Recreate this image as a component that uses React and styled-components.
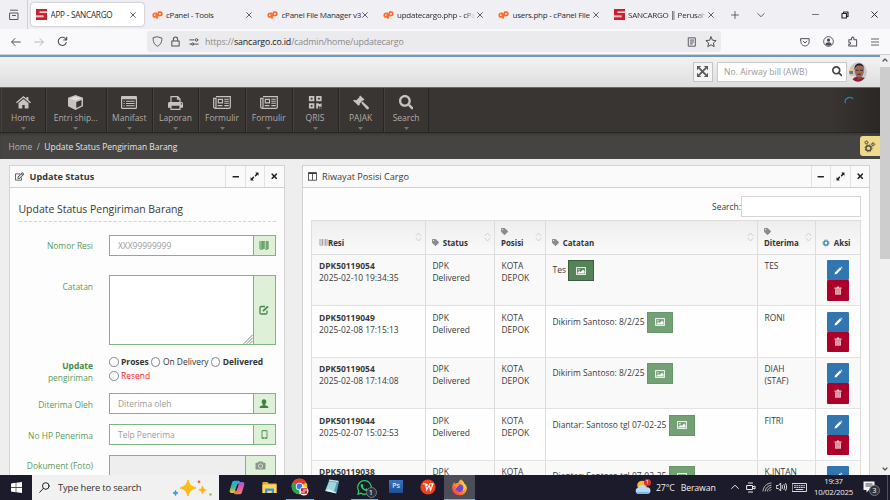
import React from "react";
import styled, { createGlobalStyle, css } from "styled-components";
import { FaQrcode, FaSearch, FaRegEdit, FaTag, FaTimes, FaMinus, FaWhatsapp } from "react-icons/fa";

const Global = createGlobalStyle`
  * { box-sizing: border-box; }
  body { margin: 0; background: #eee; overflow: hidden; }
  svg { display: block; flex: none; }
`;

const Screen = styled.div`
  width: 890px;
  height: 500px;
  display: flex;
  flex-direction: column;
  overflow: hidden;
  font-family: "Open Sans", "Noto Sans", sans-serif;
  font-size: 8.45px;
  color: #393939;
  white-space: nowrap;
`;

/* ---------- browser chrome ---------- */
const TabBar = styled.div`
  flex: none;
  height: 29px;
  background: #f0f0f4;
  display: flex;
  align-items: center;
`;
const TabMenu = styled.div`
  flex: none;
  width: 28px;
  height: 29px;
  border-right: 1px solid #cfcfd6;
  display: flex;
  align-items: center;
  justify-content: center;
  margin-right: 3px;
`;
const Tab = styled.div`
  flex: none;
  width: 112.5px;
  height: 23px;
  margin-right: 3px;
  padding-left: 5px;
  display: flex;
  align-items: center;
  border-radius: 3px;
  ${(p) => p.$active && css`
    background: #fff;
    box-shadow: 0 0 2px rgba(0, 0, 0, 0.4);
  `}
`;
const TabTitle = styled.span`
  flex: none;
  width: ${(p) => p.$w}px;
  margin-left: 3.5px;
  font-size: ${(p) => p.$s || 8}px;
  letter-spacing: -0.25px;
  color: #2b2a33;
  overflow: hidden;
  ${(p) => p.$fade && css`
    mask-image: linear-gradient(90deg, #000 88%, transparent 100%);
  `}
`;
const TabClose = styled.div`
  width: 8px;
  margin-left: ${(p) => p.$ml}px;
`;
const NavBar = styled.div`
  flex: none;
  height: 26px;
  background: #f9f9fb;
  border-bottom: 1px solid #d0d0d4;
  display: flex;
  align-items: center;
`;
const NavSlot = styled.div`
  flex: none;
  width: ${(p) => p.$w}px;
  display: flex;
  justify-content: center;
  color: ${(p) => p.$c || "#4f4f59"};
`;
const UrlBar = styled.div`
  width: 574px;
  height: 21px;
  border-radius: 3px;
  background: #ebebed;
  display: flex;
  align-items: center;
`;
const Url = styled.div`
  flex: 1;
  padding-left: 2px;
  padding-top: 1px;
  font-size: 8.8px;
  letter-spacing: -0.13px;
  color: #8a8a8f;
`;
const UrlHost = styled.span`
  color: #17171c;
`;

/* ---------- web page ---------- */
const Viewport = styled.div`
  flex: 1;
  min-height: 0;
  display: flex;
`;
const Page = styled.div`
  width: 879.5px;
  height: 420px;
  overflow: hidden;
  background: #eeeeee;
  display: flex;
  flex-direction: column;
`;
const ScrollBar = styled.div`
  flex: 1;
  background: #f0f0f0;
  display: flex;
  flex-direction: column;
  align-items: center;
  justify-content: space-between;
  padding: 2px 0 3px;
`;
const Thumb = styled.div`
  width: 10px;
  height: 192px;
  margin: 4px 0 auto;
  background: #cdcdcd;
`;
const Header = styled.header`
  flex: none;
  height: 33px;
  border-top: 2px solid #6c9bc1;
  border-bottom: 1px solid #6d6966;
  background: linear-gradient(#f2f2f2, #dedede);
  display: flex;
  align-items: center;
  justify-content: flex-end;
  padding: 0 13px 1px 0;
`;
const FullBtn = styled.div`
  width: 19.5px;
  height: 20px;
  border: 1px solid #c4c4c4;
  background: #f4f4f4;
  display: flex;
  align-items: center;
  justify-content: center;
  margin-right: 4px;
`;
const AwbBox = styled.div`
  width: 130px;
  height: 20px;
  border: 1px solid #cacaca;
  background: #fff;
  display: flex;
  align-items: center;
  justify-content: space-between;
  padding: 0 3.5px 0 6.5px;
  font-size: 8.6px;
  color: #999;
  margin-right: 2px;
`;
const Menu = styled.nav`
  flex: none;
  height: 45px;
  border-bottom: 1px solid #272422;
  background: linear-gradient(90deg, #393532 0 830px, #2b2725 880px);
  display: flex;
  padding-left: 1px;
`;
const MenuItem = styled.div`
  width: ${(p) => p.$w}px;
  border-right: 1px solid #282522;
  box-shadow: inset 1px 0 #47423f;
  display: flex;
  flex-direction: column;
  align-items: center;
  color: #c8c3bf;
`;
const MenuIcon = styled.div`
  height: 15px;
  margin-top: 7px;
  display: flex;
  align-items: center;
`;
const MenuLabel = styled.div`
  height: 12px;
  line-height: 12px;
  margin-top: 2px;
  color: #b0aba7;
  font-size: 8.5px;
`;
const MenuCaret = styled.div`
  margin-top: 3px;
`;
const Loader = styled.div`
  margin: 8px 0 0 auto;
  width: 36px;
`;
const Crumbs = styled.div`
  flex: none;
  height: 26px;
  background: #464442;
  box-shadow: inset 0 2px 2px #3b3937;
  display: flex;
  align-items: center;
  padding-left: 8.5px;
  font-size: 8.45px;
  color: #b8b5b3;
`;
const Current = styled.span`
  margin-left: 4.5px;
  color: #e6e4e2;
`;
const GearTab = styled.div`
  margin-left: auto;
  width: 20px;
  height: 20px;
  border-radius: 3px 0 0 3px;
  background: #f0d88c;
  display: flex;
  align-items: center;
  justify-content: center;
`;
const Columns = styled.main`
  flex: 1;
  display: flex;
  gap: 17px;
  padding: 6px 0 0 9px;
`;
const Panel = styled.section`
  width: ${(p) => p.$w}px;
  height: 340px;
  border: 1px solid #d3d3d3;
  background: #fdfdfd;
`;
const PanelHead = styled.div`
  height: 22px;
  border-bottom: 1px solid #cfcfcf;
  background: #fafafa;
  display: flex;
  align-items: stretch;
`;
const PanelTitle = styled.div`
  flex: 1;
  display: flex;
  align-items: center;
  gap: 5.5px;
  padding-left: 5px;
  font-size: 9.15px;
  font-weight: ${(p) => (p.$bold ? 700 : 400)};
`;
const PanelTool = styled.div`
  width: 19.5px;
  border-left: 1px solid #e2e2e2;
  display: flex;
  align-items: center;
  justify-content: center;
  color: #222;
`;

/* ---------- form ---------- */
const FormBody = styled.div`
  padding: 0 8px 0 8.5px;
`;
const FormTitle = styled.div`
  height: 34px;
  padding-top: 8.5px;
  line-height: 24px;
  border-bottom: 1px dashed #d4d4d4;
  font-size: 10.45px;
`;
const Field = styled.div`
  display: flex;
  margin-top: ${(p) => p.$mt}px;
  height: ${(p) => p.$h}px;
`;
const Label = styled.div`
  width: 74.5px;
  margin-right: 16px;
  padding-top: ${(p) => p.$pt ?? 5.5}px;
  line-height: 12px;
  text-align: right;
  color: #5a9a5a;
  font-size: 8.45px;
`;
const LabelStrong = styled.div`
  font-weight: 700;
  color: #458c45;
`;
const Control = styled.div`
  flex: 1;
  display: flex;
  border: 1px solid #80b581;
  background: ${(p) => (p.$disabled ? "#eeeeee" : "#fff")};
`;
const ControlText = styled.div`
  flex: 1;
  padding-left: 8px;
  display: flex;
  align-items: ${(p) => (p.$area ? "flex-end" : "center")};
  justify-content: ${(p) => (p.$area ? "flex-end" : "flex-start")};
  color: #9b9b9b;
  font-size: 8.45px;
`;
const Addon = styled.div`
  width: ${(p) => p.$w || 22}px;
  border-left: 1px solid #80b581;
  background: #dff0d8;
  display: flex;
  align-items: center;
  justify-content: center;
  color: #468847;
`;
const Radios = styled.div`
  flex: 1;
  display: flex;
  flex-wrap: wrap;
  align-content: flex-start;
  line-height: 14px;
`;
const Radio = styled.label`
  display: flex;
  align-items: center;
  height: 14px;
  gap: 2.5px;
  margin-right: 2.2px;
  font-size: 8.45px;
  font-weight: ${(p) => (p.$bold ? 700 : 400)};
  color: ${(p) => p.$c || "#333"};
`;
const Ring = styled.span`
  width: 9.5px;
  height: 9.5px;
  border-radius: 50%;
  border: 1.4px solid #85848d;
  background: #fff;
`;

/* ---------- table ---------- */
const TableBody = styled.div`
  padding: 8px 8px 0 8.5px;
`;
const SearchLine = styled.div`
  height: 21px;
  display: flex;
  justify-content: flex-end;
  align-items: center;
  margin-bottom: 3px;
`;
const SearchLabel = styled.span`
  margin-top: -1px;
`;
const SearchInput = styled.div`
  width: 120px;
  height: 21px;
  border: 1px solid #d5d5d5;
  background: #fff;
`;
const Table = styled.div`
  border: 1px solid #ddd;
`;
const columns = css`
  display: grid;
  grid-template-columns: 113.5px 69px 51px 212px 58px 1fr;
`;
const HeadRow = styled.div`
  ${columns}
  height: 33.5px;
  background: linear-gradient(#eeeeee, #fafafa);
  border-bottom: 1px solid #ddd;
`;
const HeadCell = styled.div`
  border-right: ${(p) => (p.$last ? 0 : 1)}px solid #ddd;
  padding: ${(p) => (p.$stack ? 4 : 15.5)}px 3px 0 6.5px;
  display: flex;
  justify-content: space-between;
  font-weight: 700;
  line-height: 12px;
  font-size: 7.9px;
  color: #333;
`;
const HeadLabel = styled.div`
  display: flex;
  flex-direction: ${(p) => (p.$stack ? "column" : "row")};
  align-items: ${(p) => (p.$stack ? "flex-start" : "center")};
  gap: ${(p) => p.$gap ?? 3.8}px;
  height: ${(p) => (p.$stack ? "auto" : "12px")};
`;
const SortMark = styled.div`
  margin-top: ${(p) => (p.$stack ? 7 : -4.5)}px;
`;
const Row = styled.div`
  ${columns}
  height: 51.5px;
  border-bottom: 1px solid #e2e2e2;
  background: ${(p) => (p.$odd ? "#f9f9f9" : "#fefefe")};
`;
const Cell = styled.div`
  border-right: ${(p) => (p.$last ? 0 : 1)}px solid #ddd;
  padding: 5.5px 0 0 ${(p) => p.$pl ?? 7}px;
  line-height: 12.4px;
  font-size: 8.45px;
  overflow: hidden;
`;
const NoteLine = styled.div`
  display: flex;
  align-items: center;
  gap: 2.5px;
  height: 21px;
`;
const PhotoBtn = styled.div`
  width: 26px;
  height: 21px;
  background: ${(p) => (p.$dark ? "#568259" : "#73a074")};
  border: 1px solid ${(p) => (p.$dark ? "#355e39" : "#669768")};
  display: flex;
  align-items: center;
  justify-content: center;
`;
const ActionBtn = styled.div`
  width: 22px;
  height: 20.3px;
  margin-left: 11.5px;
  background: ${(p) => (p.$danger ? "#ab0029" : "#3276b1")};
  border-radius: 1px;
  display: flex;
  align-items: center;
  justify-content: center;
`;

/* ---------- taskbar ---------- */
const Taskbar = styled.footer`
  flex: none;
  height: 25px;
  background: #1b1b2b;
  display: flex;
  color: #eee;
`;
const Slot = styled.div`
  width: ${(p) => p.$w}px;
  height: 25px;
  margin: 0 ${(p) => p.$m || 0}px;
  display: flex;
  align-items: center;
  justify-content: center;
  background: ${(p) => (p.$active ? "#4d4d5a" : "transparent")};
  border-bottom: 1px solid ${(p) => (p.$running ? "#6cb0e8" : "transparent")};
`;
const Divider = styled.div`
  width: 1px;
  margin-left: 5px;
  margin-right: 2px;
  background: #4f4f5e;
`;
const SearchBox = styled.div`
  width: 187px;
  background: #f1f1f1;
  display: flex;
  align-items: center;
  padding-left: 7px;
  color: #333;
  font-size: 9.4px;
`;
const SearchHint = styled.span`
  flex: 1;
  margin-left: 8px;
  letter-spacing: -0.15px;
`;
const Weather = styled.div`
  width: 71px;
  display: flex;
  align-items: center;
  gap: 6px;
  font-size: 8.75px;
  letter-spacing: -0.15px;
`;
const Clock = styled.div`
  width: 49px;
  padding-top: 1px;
  text-align: center;
  font-size: 7.8px;
  line-height: 11.4px;
  letter-spacing: -0.25px;
`;
const Spacer = styled.div`
  flex: 1;
`;

/* ---------- drawings ---------- */
const Stroke = ({ w = 12, h = w, vb = "0 0 12 12", sw = 1, c = "currentColor", children }) => (
  <svg width={w} height={h} viewBox={vb} fill="none" stroke={c} strokeWidth={sw} strokeLinecap="round" strokeLinejoin="round">
    {children}
  </svg>
);
const Cross = ({ s = 6, c = "#3c3c44" }) => (
  <Stroke w={s} vb="0 0 6 6" sw={0.8} c={c}><path d="M.6.6l4.800 4.800M5.400.6L.6 5.400" /></Stroke>
);
const SLogo = () => (
  <svg width="11" height="11" viewBox="0 0 11 11">
    <path d="M0 0h11v2.400H3.600v1.700H11V11H0V8.300h7.600V6.600H0z" fill="#c9222e" />
    <path d="M3.600 3.200H11M0 7.500h7.400" stroke="#ec969b" strokeWidth=".6" />
  </svg>
);
const CpLogo = () => (
  <svg width="11" height="8" viewBox="0 0 11 8" fill="none" stroke="#ff6c2c" strokeWidth="1.700" strokeLinejoin="round" strokeLinecap="round">
    <path d="M4.400 2.400H3a1.700 1.700 0 000 3.500h.8L4.500 3.600M5 7l1.600-5.800h1.600a1.600 1.600 0 010 3.300H6.800" />
  </svg>
);

const HomeIcon = () => (
  <svg width="15" height="13" viewBox="0 0 15 13" fill="currentColor">
    <path d="M7.500 2.900l5 4.200v4.800c0 .4-.2.600-.6.600H8.700V8.900H6.300v3.600H3.100c-.4 0-.6-.2-.6-.6V7.100z" />
    <path d="M7.500 0L10.400 2.400V.9h2v3.200L15 6.300l-.9 1L7.500 1.800.9 7.300 0 6.300z" />
  </svg>
);
const CubeIcon = () => (
  <svg width="15" height="15" viewBox="0 0 15 15">
    <path d="M7.500 0L15 2.800v8.500L7.500 15 0 11.300V2.800z" fill="currentColor" />
    <path d="M7.500 1.500L13 3.500 7.500 5.500 2 3.500z" fill="#e5e0dc" />
    <path d="M8.300 7.100l5.200-2v5.400L8.300 13.100z" fill="#393532" />
  </svg>
);
const ManifestIcon = () => (
  <svg width="16" height="13" viewBox="0 0 16 13">
    <path fillRule="evenodd" fill="currentColor" d="M1.200 0h13.600c.7 0 1.200.5 1.200 1.200v10.600c0 .7-.5 1.200-1.200 1.200H1.200C.5 13 0 12.500 0 11.800V1.200C0 .5.500 0 1.200 0zM1.200 3.300v8.500h13.600V3.300z" />
    <path d="M2.500 5.200h1.200M5 5.200h8.600M2.500 7.500h1.200M5 7.500h8.600M2.500 9.800h1.200M5 9.800h8.600" stroke="currentColor" strokeWidth="1.100" />
  </svg>
);
const PrintIcon = () => (
  <svg width="15" height="14" viewBox="0 0 15 14">
    <path d="M3 6.500V.7h6.800l2.200 2.200v3.600M9.500.7v2.500H12" fill="none" stroke="currentColor" strokeWidth="1.200" />
    <path fillRule="evenodd" fill="currentColor" d="M1.700 6h11.600c1 0 1.700.7 1.700 1.700v4H12.600V14H2.400v-2.300H0v-4C0 6.700.7 6 1.700 6zM3.600 9.800v3h7.800v-3zM12.800 7.200v1.200H14V7.200z" />
  </svg>
);
const NewsIcon = () => (
  <svg width="18" height="13" viewBox="0 0 18 13" fill="none" stroke="currentColor" strokeWidth="1.200">
    <path d="M3 .7h14.300v10.200c0 .9-.5 1.400-1.300 1.400H2.300C1.300 12.300.7 11.700.7 10.700V2.400H3v8.400c0 1-.6 1.500-1.200 1.500" />
    <path d="M5.300 3.300h4.200v3.500H5.300z" />
    <path d="M11.300 3.200h4.500M11.300 5.200h4.500M11.300 7.200h4.500M4.700 9.600h4.800M11.300 9.600h4.500" strokeWidth="1.100" />
  </svg>
);
const GavelIcon = () => (
  <svg width="16" height="15" viewBox="0 0 16 15" fill="currentColor">
    <path d="M7.200.4l4.300 4.200-1 1-.5-.3-3.300 3.300.3.600-1 1L1.700 6l1-1 .6.300L6.600 2l-.4-.6z" />
    <path d="M0 5.500l1.500-.7 5 5-1 1z" />
    <path d="M8.200 7.800L9.500 6.500l1.300 1.300 4.700 4.300c.6.700.6 1.300 0 1.900s-1.300.6-1.900 0L9.300 9.200z" />
  </svg>
);
const QrIcon = () => <FaQrcode size={14.5} />;
const MagnifierIcon = () => <FaSearch size={14.5} />;
const CaretIcon = () => <svg width="5" height="3" viewBox="0 0 5 3"><path d="M0 0h5L2.500 3z" fill="#78736f" /></svg>;

const TagBox = styled.span`
  display: inline-flex;
  height: 12px;
  align-items: center;
`;
const TagIcon = () => <TagBox><FaTag size={7} color="#8c8c8c" /></TagBox>;
const SortIcon = () => (
  <Stroke w={7} h={10} vb="0 0 7 10" sw={0.8} c="#c9c9c9"><path d="M1 3.800L3.500 1 6 3.800M1 6.200L3.500 9 6 6.200" /></Stroke>
);
const BarcodeIcon = ({ c = "#468847", w = 10, h = 9 }) => (
  <svg width={w} height={h} viewBox="0 0 10 9" preserveAspectRatio="none" fill={c}>
    <path d="M.5 0h1v8h-1zM2 0h.6v8H2zM3.200 0h1.500v8H3.200zM5.400 0H6v8h-.6zM6.700 0h1v8h-1zM8.300 0h1.200v8H8.300zM1 8.400h3v.6H1zM6 8.400h3v.6H6z" />
  </svg>
);
const ExpandIcon = () => (
  <svg width="9" height="9" viewBox="0 0 9 9" fill="#222">
    <path d="M5.200.5h3.300v3.300L7.500 2.800 5.600 4.700l-.9-.9L6.200 1.500zM3.800 8.500H.5V5.200l1 1L3.400 4.300l.9.900L2.800 7.500z" />
  </svg>
);
const FullIcon = () => (
  <svg width="11" height="11" viewBox="0 0 10 10">
    <path d="M2 2l6 6M8 2L2 8" stroke="#585858" strokeWidth="1.600" />
    <path d="M0 0h3.800L0 3.800zM10 0v3.800L6.200 0zM0 10V6.200L3.800 10zM10 10H6.200L10 6.200z" fill="#585858" />
  </svg>
);
const ColumnsIcon = () => (
  <svg width="9" height="9" viewBox="0 0 9 9" fill="none" stroke="#333" strokeWidth=".8">
    <rect x=".5" y=".8" width="8" height="7.400" /><path d="M4.500 1v7" /><path d="M.5 1.200h8" strokeWidth="1.500" />
  </svg>
);
const PictureIcon = () => (
  <svg width="10" height="8" viewBox="0 0 10 8">
    <rect x=".6" y=".6" width="8.800" height="6.800" fill="none" stroke="#f3f8f3" strokeWidth="1" />
    <circle cx="2.900" cy="2.700" r=".8" fill="#f3f8f3" />
    <path d="M1.500 6.400V5.500L3.500 4l1.200 1 2.300-2.500 1.500 1.800v2.100z" fill="#f3f8f3" />
  </svg>
);
const PencilIcon = () => (
  <svg width="9" height="9" viewBox="0 0 9 9" fill="#fff">
    <path d="M.5 8.500l.6-2.200L5.900 1.500l1.600 1.600-4.800 4.800zM6.400 1l.6-.5 1.500 1.500-.5.600z" />
  </svg>
);
const TrashIcon = () => (
  <svg width="8" height="9" viewBox="0 0 8 9">
    <path d="M3 .5h2v1h2.500v1.200h-7V1.500H3z" fill="#f6d5dc" />
    <path d="M1 3.200h6V8.700H1z" fill="#e6b0bb" />
    <path d="M2.700 3.800v4M4 3.800v4M5.300 3.800v4" stroke="#c86078" strokeWidth=".5" />
  </svg>
);
const GearShape = ({ x, y, r, w, c }) => (
  <g fill="none" stroke={c}>
    <circle cx={x} cy={y} r={r} strokeWidth={w} />
    <circle cx={x} cy={y} r={r + w * 0.7} strokeWidth={w * 0.6} strokeDasharray={`${(r + w * 0.7) * 0.3927}`} />
  </g>
);
const UserIcon = () => (
  <svg width="10" height="9" viewBox="0 0 10 9" fill="#3f833f">
    <path d="M5 .2c1.500 0 2.300 1 2.300 2.500 0 1.200-.6 2.100-1.200 2.600v.8c.2.500 3.200 1 3.200 1.800V9H.7V7.900c0-.8 3-1.300 3.200-1.800v-.8C3.300 4.800 2.700 3.900 2.700 2.700 2.700 1.200 3.500.2 5 .2z" />
  </svg>
);
const PhoneIcon = () => (
  <svg width="7" height="9" viewBox="0 0 7 9"><path fillRule="evenodd" fill="#5f9c5f" d="M1.500 0h4a1 1 0 011 1v7a1 1 0 01-1 1h-4a1 1 0 01-1-1V1a1 1 0 011-1zm0 1.200v6h4v-6zM3 7.700v.7h1v-.7z" /></svg>
);
const CameraIcon = () => (
  <svg width="11" height="9" viewBox="0 0 11 9">
    <path d="M3.500.5h4l.8 1.300h1.500c.4 0 .7.300.7.700v5.300c0 .4-.3.700-.7.700H1.200a.7.7 0 01-.7-.7V2.500c0-.4.3-.7.700-.7h1.500z" fill="#8d948b" />
    <circle cx="5.500" cy="5" r="2.100" fill="none" stroke="#dff0d8" strokeWidth=".8" />
  </svg>
);
const EditIcon = () => (
  <svg width="10" height="10" viewBox="0 0 10 10" fill="none" stroke="#468847">
    <path d="M6 1.500H2.200A1.200 1.200 0 001 2.700v5A1.200 1.200 0 002.200 9h4.600A1.200 1.200 0 008 7.700V5.500" strokeWidth="1.300" />
    <path d="M4 6.200L9 1.300" strokeWidth="1.700" />
  </svg>
);
const Avatar = () => (
  <svg width="18" height="20" viewBox="0 0 18 20">
    <defs><clipPath id="av"><ellipse cx="9" cy="10" rx="8.800" ry="9.700" /></clipPath></defs>
    <g clipPath="url(#av)">
      <path d="M0 0h18v20H0z" fill="#c9c3cc" /><path d="M0 5h5v8H0z" fill="#d9c98f" /><path d="M0 9h4v3H0z" fill="#6a729a" />
      <path d="M0 14h6v6H0z" fill="#e3e0e6" />
      <path d="M3 20c0-4 3-5 5-5s9-1 10 5z" fill="#8e1f2c" /><path d="M7 13h6l-1 4-3 1z" fill="#7a4a3c" />
      <ellipse cx="10.300" cy="9" rx="4.600" ry="6.200" fill="#9c6a57" />
      <path d="M5.500 8C4.500-.5 15.800-.5 15 7.500c-.5-3-1.500-4-4.700-4S6.500 5 5.500 8z" fill="#241f23" />
      <path d="M6.700 8.300h2.800M11 8.300h3M8.500 12.300h3.500" stroke="#3c2925" strokeWidth="1.100" />
    </g>
  </svg>
);
const Sparkles = () => (
  <svg width="42" height="20" viewBox="0 0 42 20">
    <path d="M17 2c1.600 5 2.500 6 8 8-5.500 1.800-6.400 3-8 8-1.600-5-2.500-6.200-8-8 5.500-2 6.400-3 8-8z" fill="#fbbc14" stroke="#fbbc14" strokeLinejoin="round" />
    <path d="M31.500 8c.8 2.600 1.400 3.300 4 4-2.600.8-3.200 1.500-4 4-.8-2.500-1.400-3.200-4-4 2.600-.7 3.200-1.400 4-4z" fill="#fbb31d" stroke="#fbb31d" strokeWidth=".6" />
    <path d="M4.500 12.500c.4 1.600.8 2 2.500 2.500-1.700.5-2.100.9-2.500 2.500-.4-1.600-.8-2-2.500-2.500 1.700-.5 2.100-.9 2.500-2.500z" fill="#2b9fe8" stroke="#2b9fe8" />
    <circle cx="28" cy="3.800" r="1.400" fill="#ee6337" /><circle cx="39.500" cy="16.500" r="1.200" fill="#86c440" />
  </svg>
);
const Copilot = () => (
  <svg width="16" height="15" viewBox="0 0 16 15">
    <defs>
      <linearGradient id="cpa" x2="0" y2="1"><stop stopColor="#24a9ee" /><stop offset=".55" stopColor="#42b883" /><stop offset="1" stopColor="#f6c83a" /></linearGradient>
      <linearGradient id="cpb" x2="0" y2="1"><stop stopColor="#8a62e8" /><stop offset=".5" stopColor="#ee5a9c" /><stop offset="1" stopColor="#f68246" /></linearGradient>
    </defs>
    <path d="M5 .8h4.500c1.300 0 1.500 1 1.800 2L8.800 4 6.500 11c-.5 1.500-1.200 2-2.500 2H2.500C.8 13 .3 11.500.8 10L3 2.800C3.400 1.500 4 .8 5 .8z" fill="url(#cpa)" />
    <path d="M11 14.200H6.500c-1.300 0-1.500-1-1.800-2L7.200 11 9.500 4c.5-1.500 1.200-2 2.500-2h1.500c1.700 0 2.200 1.500 1.700 3L13 12.200c-.4 1.300-1 2-2 2z" fill="url(#cpb)" />
    <path d="M9 4.500L6.800 10.500" stroke="#1b1b2b" strokeWidth="1.300" />
  </svg>
);
const Folder = () => (
  <svg width="15" height="13" viewBox="0 0 15 13">
    <path d="M.5 1h5l1.200 1.500h7.800V12H.5z" fill="#e2a931" /><path d="M.5 3.500h14V12H.5z" fill="#fcd462" />
    <path d="M3 12V8.500c0-.6.400-1 1-1h7c.6 0 1 .4 1 1V12H9.800V9.800H5.200V12z" fill="#3894d8" />
  </svg>
);
const Chrome = () => (
  <svg width="18" height="18" viewBox="0 0 18 18">
    <circle cx="8.500" cy="8.500" r="7.800" fill="#fbc116" />
    <path d="M8.500 8.500L1.700 4.600A7.800 7.800 0 0115.300 4.600z" fill="#e33b2e" />
    <path d="M8.500 8.500L1.700 4.600A7.800 7.800 0 008 16.300z" fill="#2da14c" />
    <circle cx="8.500" cy="8.500" r="3.700" fill="#fff" /><circle cx="8.500" cy="8.500" r="2.900" fill="#347de8" />
    <circle cx="13" cy="13" r="4.500" fill="#f5e9ea" />
    <path d="M10 10.200h6v1.400h-4v.8h4v3.400h-6v-1.400h4v-.8h-4z" fill="#c9222e" />
  </svg>
);
const Notepad = () => (
  <svg width="16" height="16" viewBox="0 0 16 16">
    <path d="M5 1.500l10 1.300-2.500 11.500L1 12z" fill="#4f9db5" /><path d="M5.200 2.500l7.500 1L10 12.500 1.800 11z" fill="#9ed8df" />
    <path d="M1 11.800l3.500-1.500 7 2.700.8 1.500z" fill="#e9f1ee" /><path d="M5 1.200l9.500 1.300" stroke="#d8dfdf" strokeWidth="1.300" />
  </svg>
);
const BadgeBox = styled.div`
  position: relative;
`;
const Badge = styled.span`
  position: absolute;
  left: ${(p) => p.$x}px;
  top: ${(p) => p.$y}px;
  width: ${(p) => p.$s || 11}px;
  height: ${(p) => p.$s || 11}px;
  border-radius: 50%;
  border: ${(p) => (p.$c ? 0 : 1)}px solid #77787c;
  background: ${(p) => p.$c || "#303238"};
  color: #fff;
  font-size: ${(p) => (p.$c ? 5.5 : 7.5)}px;
  line-height: ${(p) => (p.$c ? 7 : 9)}px;
  display: flex;
  align-items: center;
  justify-content: center;
`;
const PsTile = styled.div`
  width: 14px;
  height: 13px;
  margin-bottom: 2px;
  background: linear-gradient(#3a76c2, #1d4f98);
  color: #d8ebff;
  font-size: 7px;
  font-weight: 600;
  line-height: 12px;
  text-align: center;
`;
const Wps = () => (
  <svg width="16" height="16" viewBox="0 0 16 16">
    <circle cx="8" cy="8" r="7.600" fill="#f5401d" />
    <path d="M3.200 4.800h2.300l1.300 6L9.300 6l1.200 5 2.500-6.200H9M6.500 4.800l.8 2" fill="none" stroke="#fff" strokeWidth="1.200" />
  </svg>
);
const Firefox = () => (
  <svg width="17" height="17" viewBox="0 0 17 17">
    <defs>
      <linearGradient id="ffa" x1="1" x2="0" y2="1"><stop stopColor="#ffe23e" /><stop offset=".5" stopColor="#ff8a25" /><stop offset="1" stopColor="#f2295b" /></linearGradient>
    </defs>
    <path d="M10 .5c2 1.200 3 2.500 3.200 4 1.800 1 2.800 3 2.800 5A7.300 7.300 0 018.500 16.300 7.400 7.400 0 011 9c0-2.500 1-4.500 2.500-6l.5 2c1-1 2-1.200 3-1 .8-1.600 1.500-2.800 3-3.500z" fill="url(#ffa)" />
    <circle cx="8.700" cy="9.300" r="3.700" fill="#7542d8" />
    <path d="M3.500 6c2-1 4-.5 5 .8-1.500.2-2.500 1-2.500 2.500-1-.8-2.200-2-2.500-3.300z" fill="#ff9a2b" />
    <path d="M10.300 2c0 2 2.500 3.500 2.500 6.500 0 1.500-.7 2.800-1.800 3.600 4-1 4-5.500 2-7.600z" fill="#ffd43a" />
  </svg>
);
const Cloud = () => (
  <svg width="16" height="15" viewBox="0 0 16 15">
    <circle cx="7" cy="5.500" r="4.800" fill="#f9b534" />
    <path d="M3.500 14a3.200 3.200 0 01-.3-6.300 4.600 4.600 0 018.500-.4A3.300 3.300 0 0112.500 14z" fill="#bcd8f5" />
    <path d="M3.500 14a3 3 0 01-2.700-2h14a3 3 0 01-2.300 2z" fill="#7db5ea" />
  </svg>
);

/* ---------- data ---------- */
const menu = [
  ["Home", 45, HomeIcon], ["Entri ship...", 60.5, CubeIcon], ["Manifast", 46.5, ManifestIcon],
  ["Laporan", 46, PrintIcon], ["Formulir", 47, NewsIcon], ["Formulir", 46.5, NewsIcon],
  ["QRIS", 46, QrIcon], ["PAJAK", 45.3, GavelIcon], ["Search", 45.7, MagnifierIcon],
];
const rows = [
  ["DPK50119054", "2025-02-10 19:34:35", "Tes", ["TES"]],
  ["DPK50119049", "2025-02-08 17:15:13", "Dikirim Santoso: 8/2/25", ["RONI"]],
  ["DPK50119054", "2025-02-08 17:14:08", "Dikirim Santoso: 8/2/25", ["DIAH", "(STAF)"]],
  ["DPK50119044", "2025-02-07 15:02:53", "Diantar: Santoso tgl 07-02-25", ["FITRI"]],
  ["DPK50119038", "", "Diantar: Santoso tgl 07-02-25", ["K.INTAN"]],
];

const PanelTools = () => (
  <>
    <PanelTool><FaMinus size={7.5} /></PanelTool>
    <PanelTool><ExpandIcon /></PanelTool>
    <PanelTool><FaTimes size={8.5} /></PanelTool>
  </>
);
const Head = ({ children, stack, last, sort = true, icon, gap }) => (
  <HeadCell $stack={stack} $last={last}>
    <HeadLabel $stack={stack} $gap={stack ? 0 : gap}>{icon || <TagIcon />}<span>{children}</span></HeadLabel>
    {sort && <SortMark $stack={stack}><SortIcon /></SortMark>}
  </HeadCell>
);

const BrowserChrome = () => (
  <>
    <TabBar>
      <TabMenu>
        <Stroke w={12} c="#55555f"><path d="M2 4h8v6.500H2zM2.500 1.200h7M4.500 6.500h3" /></Stroke>
      </TabMenu>
      <Tab $active><SLogo /><TabTitle $w={64} $s={8.2}>APP - SANCARGO</TabTitle><TabClose $ml={15.5}><Cross /></TabClose></Tab>
      <Tab><CpLogo /><TabTitle $w={55}>cPanel - Tools</TabTitle><TabClose $ml={24.5}><Cross /></TabClose></Tab>
      <Tab><CpLogo /><TabTitle $w={81}>cPanel File Manager v3</TabTitle><TabClose $ml={-1}><Cross /></TabClose></Tab>
      <Tab><CpLogo /><TabTitle $w={78} $fade>updatecargo.php - cPanel</TabTitle><TabClose $ml={2}><Cross /></TabClose></Tab>
      <Tab><CpLogo /><TabTitle $w={78}>users.php - cPanel File</TabTitle><TabClose $ml={2}><Cross /></TabClose></Tab>
      <Tab><SLogo /><TabTitle $w={78} $fade>SANCARGO ║ Perusahaan</TabTitle><TabClose $ml={2}><Cross /></TabClose></Tab>
      <NavSlot $w={22}><Stroke w={8} vb="0 0 8 8" sw={0.8} c="#44444c"><path d="M4 .5v7M.5 4h7" /></Stroke></NavSlot>
      <NavSlot $w={30}><Stroke w={8} vb="0 0 8 8" sw={0.9} c="#55555c"><path d="M.7 2.500L4 5.700l3.300-3.200" /></Stroke></NavSlot>
      <NavSlot $w={24} />
      <NavSlot $w={30}><Stroke w={7} vb="0 0 7 7" sw={0.9} c="#666"><path d="M.5 3.500h6" /></Stroke></NavSlot>
      <NavSlot $w={29}><Stroke w={8} vb="0 0 8 8" sw={1.1} c="#222"><path d="M1 2.500h4.500V7H1zM2.500 2.300V1H7v4.500H5.700" /></Stroke></NavSlot>
      <NavSlot $w={31}><Cross s={7} c="#222" /></NavSlot>
    </TabBar>
    <NavBar>
      <NavSlot $w={31}><Stroke w={10} vb="0 0 10 10"><path d="M9.300 5H.8M4 1.500L.7 5 4 8.500" /></Stroke></NavSlot>
      <NavSlot $w={16} $c="#b8b8bf"><Stroke w={10} vb="0 0 10 10"><path d="M.7 5h8.500M6 1.500L9.300 5 6 8.500" /></Stroke></NavSlot>
      <NavSlot $w={31}><Stroke w={11} vb="0 0 11 11" sw={1.1}><path d="M9.300 6.500A4.100 4.100 0 119 3.400M9.700 1v3H6.700" /></Stroke></NavSlot>
      <NavSlot $w={69} />
      <UrlBar>
        <NavSlot $w={20}><Stroke w={11} vb="0 0 12 12"><path d="M6 .9l4.800 1.400c0 4-1 7-4.800 8.800C2.200 9.300 1.200 6.300 1.200 2.300z" /></Stroke></NavSlot>
        <NavSlot $w={17}><Stroke w={11} vb="0 0 12 12" sw={1.1}><path d="M2 5.500h8v5.300H2zM3.700 5.300V3.500a2.300 2.300 0 014.600 0v1.800" /></Stroke></NavSlot>
        <NavSlot $w={19}><Stroke w={10} vb="0 0 12 12" sw={1.2}><path d="M1 3.500h5M11 8.500H7M1 8.500h2" /><circle cx="9" cy="3.500" r="1.500" /><circle cx="4.500" cy="8.500" r="1.300" /></Stroke></NavSlot>
        <Url>https://<UrlHost>sancargo.co.id</UrlHost>/cadmin/home/updatecargo</Url>
        <NavSlot $w={17}><Stroke w={10} vb="0 0 12 12" sw={1.1}><path d="M2 1h8v10H2zM4 3.700h4M4 6h4M4 8.300h2.500" /></Stroke></NavSlot>
        <NavSlot $w={21}><Stroke w={12} sw={1}><path d="M6 .9l1.500 3.300 3.600.4-2.700 2.400.8 3.600L6 8.800l-3.200 1.800.8-3.600L.9 4.600l3.600-.4z" /></Stroke></NavSlot>
      </UrlBar>
      <NavSlot $w={72.5} />
      <NavSlot $w={22}><Stroke w={10} vb="0 0 12 12" sw={1.2}><path d="M1 2h10v3.500c0 7-10 7-10 0zM3.800 5L6 7.200 8.200 5" /></Stroke></NavSlot>
      <NavSlot $w={25}><svg width="11" height="11" viewBox="0 0 12 12"><circle cx="6" cy="6" r="5.300" fill="none" stroke="#4a4a55" /><circle cx="6" cy="4.400" r="1.800" fill="#4a4a55" /><path d="M2.500 9c.5-3 6.500-3 7 0-1.500 2-5.500 2-7 0z" fill="#4a4a55" /></svg></NavSlot>
      <NavSlot $w={23}><Stroke w={11} vb="0 0 12 12" sw={1.1}><path d="M2 11V8.800c2.500.7 2.500-2.600 0-2V4h3C4 .3 8.500.3 7.500 4h3v7z" /></Stroke></NavSlot>
      <NavSlot $w={23}><Stroke w={8} vb="0 0 8 8" sw={0.9}><path d="M.3 1h7.400M.3 4h7.400M.3 7h7.400" /></Stroke></NavSlot>
    </NavBar>
  </>
);

const StatusForm = () => (
  <Panel $w={275.5}>
    <PanelHead><PanelTitle $bold><FaRegEdit size={9} />Update Status</PanelTitle><PanelTools /></PanelHead>
    <FormBody>
      <FormTitle>Update Status Pengiriman Barang</FormTitle>
      <Field $mt={12.5} $h={21.5}><Label>Nomor Resi</Label><Control><ControlText>XXX99999999</ControlText><Addon><BarcodeIcon /></Addon></Control></Field>
      <Field $mt={19} $h={70}>
        <Label $pt={5.5}>Catatan</Label>
        <Control>
          <ControlText $area><Stroke w={10} vb="0 0 10 10" sw={0.9} c="#777"><path d="M1 9.500l8.500-8.500M4 9.500L9.500 4M7 9.500L9.500 7" /></Stroke></ControlText>
          <Addon><EditIcon /></Addon>
        </Control>
      </Field>
      <Field $mt={10} $h={28}>
        <Label $pt={5}><LabelStrong>Update</LabelStrong>pengiriman</Label>
        <Radios>
          <Radio $bold><Ring />Proses</Radio><Radio><Ring />On Delivery</Radio><Radio $bold><Ring />Delivered</Radio>
          <Radio $c="#f31d1d"><Ring />Resend</Radio>
        </Radios>
      </Field>
      <Field $mt={10} $h={21}><Label>Diterima Oleh</Label><Control><ControlText>Diterima oleh</ControlText><Addon><UserIcon /></Addon></Control></Field>
      <Field $mt={10} $h={21}><Label>No HP Penerima</Label><Control><ControlText>Telp Penerima</ControlText><Addon><PhoneIcon /></Addon></Control></Field>
      <Field $mt={9.5} $h={22}><Label>Dokument (Foto)</Label><Control $disabled><ControlText /><Addon $w={30}><CameraIcon /></Addon></Control></Field>
    </FormBody>
  </Panel>
);

const CargoHistory = () => (
  <Panel $w={568.5}>
    <PanelHead><PanelTitle><ColumnsIcon />Riwayat Posisi Cargo</PanelTitle><PanelTools /></PanelHead>
    <TableBody>
      <SearchLine><SearchLabel>Search:</SearchLabel><SearchInput /></SearchLine>
      <Table>
        <HeadRow>
          <Head icon={<BarcodeIcon c="#a5a5a5" w={9} h={7} />} gap={0.5}>Resi</Head>
          <Head>Status</Head>
          <Head stack>Posisi</Head>
          <Head>Catatan</Head>
          <Head stack>Diterima</Head>
          <Head last sort={false} icon={<svg width="8" height="8" viewBox="0 0 10 10"><GearShape x={5} y={5} r={2.6} w={1.9} c="#4e8fb0" /></svg>}>Aksi</Head>
        </HeadRow>
        {rows.map(([id, time, note, who], i) => (
          <Row key={i} $odd={i % 2 === 0}>
            <Cell><b>{id}</b><br />{time}</Cell>
            <Cell>DPK<br />Delivered</Cell>
            <Cell>KOTA<br />DEPOK</Cell>
            <Cell><NoteLine>{note}<PhotoBtn $dark={i === 0}><PictureIcon /></PhotoBtn></NoteLine></Cell>
            <Cell>{who.map((line) => <div key={line}>{line}</div>)}</Cell>
            <Cell $last $pl={0}><ActionBtn><PencilIcon /></ActionBtn><ActionBtn $danger><TrashIcon /></ActionBtn></Cell>
          </Row>
        ))}
      </Table>
    </TableBody>
  </Panel>
);

const WindowsTaskbar = () => (
  <Taskbar>
    <Slot $w={32}><svg width="11" height="11" viewBox="0 0 11 11" fill="#fff"><path d="M0 1.500l4.700-.7v4.300H0zM5.300.7L11 0v5.100H5.300zM0 5.800h4.700v4.400L0 9.500zM5.300 5.800H11V11l-5.700-.8z" /></svg></Slot>
    <SearchBox>
      <Stroke w={11} vb="0 0 11 11" c="#222"><circle cx="6.800" cy="4" r="3.300" /><path d="M4.400 6.400L.7 10.300" /></Stroke>
      <SearchHint>Type here to search</SearchHint>
      <Sparkles /><Slot $w={6} />
    </SearchBox>
    <Slot $w={36}><Copilot /></Slot>
    <Slot $w={28}><Folder /></Slot>
    <Slot $w={28} $m={2.5} $running><Chrome /></Slot>
    <Slot $w={32}><Notepad /></Slot>
    <Slot $w={27} $m={2.5} $running><BadgeBox><FaWhatsapp size={17} color="#2bd366" /><Badge $x={10} $y={8}>1</Badge></BadgeBox></Slot>
    <Slot $w={32}><PsTile>Ps</PsTile></Slot>
    <Slot $w={32}><Wps /></Slot>
    <Slot $w={31} $active $running><Firefox /></Slot>
    <Spacer />
    <Slot $w={26}><BadgeBox><Cloud /><Badge $x={8.5} $y={-1} $s={7.5} $c="#d8322c">1</Badge></BadgeBox></Slot>
    <Weather><span>27°C</span><span>Berawan</span></Weather>
    <Slot $w={15}><Stroke w={8} vb="0 0 8 8" sw={1}><path d="M.7 5.500L4 2.200l3.300 3.300" /></Stroke></Slot>
    <Slot $w={18}><Stroke w={10} h={11} vb="0 0 10 11"><path d="M2.500 1h4M1 3.500h5.500v4H1zM6.500 5l2.500-1v3l-2.500-1M2.500 10h4" /></Stroke></Slot>
    <Slot $w={13}><Stroke w={10} vb="0 0 10 10" sw={0.9} c="#ccc"><path d="M1 9C1.500 4.500 4.500 1.500 9 1M3.200 9C3.700 6 6 3.700 9 3.200M5.400 9C5.700 7.200 7.200 5.700 9 5.400M7.500 9L9 7.500" /></Stroke></Slot>
    <Slot $w={17}><Stroke w={11} h={10} vb="0 0 11 10" sw={0.9}><path d="M.7 3.500h1.600L4.700 1v8L2.300 6.500H.7zM6.300 3.500v3M8 2.500c.8 1.500.8 3.500 0 5M9.700 1.500c1.200 2 1.200 5 0 7" /></Stroke></Slot>
    <Slot $w={19}><Stroke w={15} h={9} vb="0 0 15 9" sw={0.9}><path d="M.5.5h14v8H.5z" /><path d="M2.500 2.700h10M2.500 4.500h10" strokeDasharray="1 1.300" /><path d="M4 6.500h7" /></Stroke></Slot>
    <Clock>19:37<br />10/02/2025</Clock>
    <Slot $w={22}><BadgeBox><svg width="12" height="12" viewBox="0 0 12 12"><path d="M.5.5h11v8.500H6L3.500 11.500V9h-3z" fill="#f4f4f6" /><path d="M2.500 3h7M2.500 5h7" stroke="#1b1b2b" strokeWidth=".8" /></svg><Badge $x={6} $y={4}>3</Badge></BadgeBox></Slot>
    <Slot $w={2} />
    <Divider />
  </Taskbar>
);

export default function App() {
  return (
    <Screen>
      <Global />
      <BrowserChrome />
      <Viewport>
        <Page>
          <Header>
            <FullBtn><FullIcon /></FullBtn>
            <AwbBox>No. Airway bill (AWB)<FaSearch size={10.5} color="#444" /></AwbBox>
            <Avatar />
          </Header>
          <Menu>
            {menu.map(([label, w, Icon], i) => (
              <MenuItem key={i} $w={w}>
                <MenuIcon><Icon /></MenuIcon>
                <MenuLabel>{label}</MenuLabel>
                <MenuCaret><CaretIcon /></MenuCaret>
              </MenuItem>
            ))}
            <Loader><Stroke w={10} vb="0 0 10 10" sw={1.3} c="#2a83b5"><path d="M1.200 6.500C.5 2.500 5 0 8.800 2.500" /></Stroke></Loader>
          </Menu>
          <Crumbs>
            Home&nbsp; / <Current>Update Status Pengiriman Barang</Current>
            <GearTab>
              <svg width="13" height="13" viewBox="0 0 13 13">
                <GearShape x={5.5} y={8.3} r={2.5} w={1.5} c="#555145" />
                <GearShape x={3.5} y={2.5} r={1.2} w={1} c="#555145" />
                <GearShape x={10} y={4.3} r={1.2} w={1} c="#555145" />
              </svg>
            </GearTab>
          </Crumbs>
          <Columns><StatusForm /><CargoHistory /></Columns>
        </Page>
        <ScrollBar>
          <Stroke w={6} vb="0 0 6 6" sw={1.2} c="#555"><path d="M1 4l2-2 2 2" /></Stroke>
          <Thumb />
          <Stroke w={6} vb="0 0 6 6" sw={1.2} c="#555"><path d="M1 2l2 2 2-2" /></Stroke>
        </ScrollBar>
      </Viewport>
      <WindowsTaskbar />
    </Screen>
  );
}
